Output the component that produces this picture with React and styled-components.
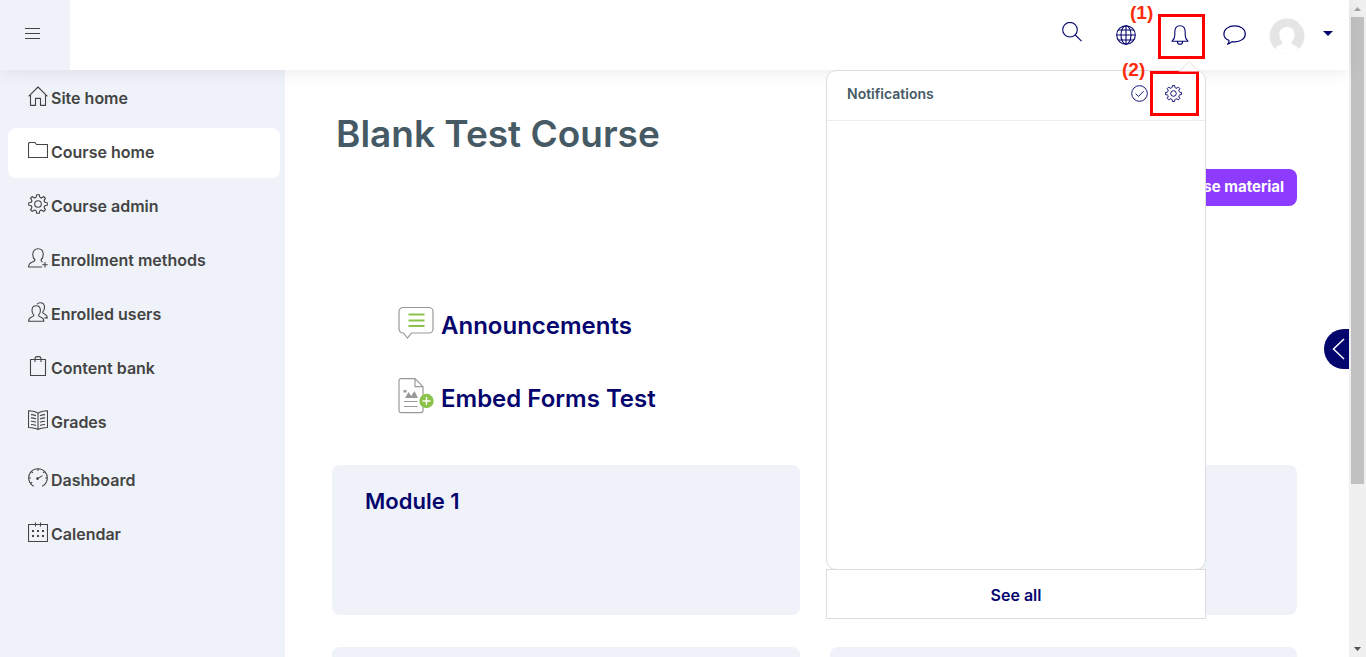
import { useState } from "react";
import styled, { createGlobalStyle, css } from "styled-components";

const GlobalStyle = createGlobalStyle`
  * {
    box-sizing: border-box;
  }
  body {
    margin: 0;
    background: #fff;
    font-family: Inter, "Open Sans", "Liberation Sans", sans-serif;
  }
  button {
    padding: 0;
    border: 0;
    background: none;
    font-family: inherit;
    cursor: pointer;
  }
  a {
    color: inherit;
    text-decoration: none;
  }
`;

const Screen = styled.div`
  display: flex;
  height: 100vh;
  overflow: hidden;
`;

const Page = styled.div`
  position: relative;
  display: flex;
  flex-direction: column;
  flex: 1;
  min-width: 0;
`;

const Header = styled.header`
  position: relative;
  z-index: 2;
  display: flex;
  justify-content: space-between;
  flex: none;
  height: 70px;
  background: #fff;
  box-shadow: 0 2px 16px rgba(0, 0, 0, 0.08);
`;

const MenuButton = styled.button`
  display: flex;
  align-items: center;
  width: 70px;
  padding: 0 0 2px 25px;
  background: #eff3f9;
  color: #444;
`;

const Tools = styled.div`
  display: flex;
  align-items: center;
  color: #05056e;
  padding-right: 16px;
`;

const ToolButton = styled.button`
  display: flex;
  align-items: center;
  justify-content: center;
  width: 54px;
  height: 70px;
  color: #05056e;
`;

const SearchButton = styled(ToolButton)`
  padding-bottom: 6px;
`;

const BellArea = styled.div`
  position: relative;
`;

const UserButton = styled(ToolButton)`
  gap: 18px;
  width: auto;
  padding: 2px 0 0 8px;
`;

const Caret = styled.span`
  border: 5px solid transparent;
  border-top-color: #05056e;
  border-bottom: 0;
  margin-bottom: 6px;
`;

const Popover = styled.section`
  position: absolute;
  top: 70px;
  right: 1px;
  width: 380px;
`;

const PopoverArrow = styled.svg`
  position: absolute;
  top: -10px;
  right: 6px;
`;

const PopoverPanel = styled.div`
  height: 500px;
  background: #fff;
  border: 1px solid #dcdcdc;
  border-radius: 10px;
`;

const PopoverHead = styled.div`
  display: flex;
  align-items: center;
  height: 50px;
  padding: 0 6px 4px 20px;
  border-bottom: 1px solid #ececec;
`;

const PopoverTitle = styled.h3`
  flex: 1;
  margin: 0;
  color: #455a64;
  font-size: 14px;
  line-height: 20px;
  font-weight: 600;
`;

const HeadButton = styled.button`
  position: relative;
  display: flex;
  width: 34px;
  height: 20px;
  align-items: center;
  color: #05056e;
`;

const SeeAll = styled.a`
  display: flex;
  align-items: center;
  justify-content: center;
  height: 50px;
  margin-top: -1px;
  padding-top: 2px;
  border: 1px solid #dcdcdc;
  background: #fff;
  font-size: 16px;
  font-weight: 600;
`;

const markText = css`
  color: #ff2a0c;
  font-family: "Liberation Sans", Arial, sans-serif;
  font-size: 19px;
  font-weight: bold;
  line-height: 20px;
`;

// numbered red frames over the controls to click
const Mark = styled.span`
  position: absolute;
  top: ${(props) => props.$top}px;
  left: ${(props) => props.$left}px;
  width: ${(props) => props.$width}px;
  height: 45px;
  border: 3px solid #f00;
  pointer-events: none;
`;

const MarkNumber = styled.span`
  position: absolute;
  top: -14px;
  left: -31px;
  ${markText}
`;

const Body = styled.div`
  display: flex;
  flex: 1;
  min-height: 0;
`;

const Sidebar = styled.nav`
  flex: none;
  width: 285px;
  padding: 4px 5px 0 8px;
  background: #eff3f9;
`;

const NavList = styled.ul`
  margin: 0 0 8px;
  padding: 0;
  list-style: none;
`;

const NavItem = styled.li`
  margin-bottom: 4px;
`;

const NavLink = styled.a`
  display: flex;
  align-items: center;
  gap: 3px;
  height: 50px;
  padding: 0 0 2px 20px;
  border-radius: 8px;
  background: ${(props) => (props.$active ? "#fff" : "transparent")};
  color: #444;
  font-size: 16px;
  font-weight: 600;

  svg {
    margin-bottom: 4px;
  }
`;

const Main = styled.main`
  flex: 1;
  min-width: 0;
  padding: 40px 52px 0 47px;
  overflow: hidden;
`;

const Title = styled.h1`
  margin: 0 4px;
  color: #455a64;
  font-size: 37px;
  line-height: 48px;
  font-weight: 600;
`;

const Toolbar = styled.div`
  display: flex;
  justify-content: flex-end;
  margin: 11px 0 83px;
`;

const MaterialButton = styled.button`
  height: 37px;
  padding: 0 13px 2px;
  border-radius: 8px;
  background: #8c3bff;
  color: #fff;
  font-size: 15px;
  font-weight: 700;
`;

const Activities = styled.ul`
  margin: 0 0 30px;
  padding: 0 0 0 66px;
  list-style: none;
`;

const Activity = styled.li`
  display: flex;
  align-items: center;
  height: 73px;
`;

const ActivityLink = styled.a`
  display: flex;
  align-items: center;
  gap: 7px;
  color: #05056e;
  font-size: 24px;
  line-height: 30px;
  font-weight: 600;

  svg {
    margin-bottom: 6px;
  }
`;

const Modules = styled.div`
  display: grid;
  grid-template-columns: 1fr 1fr;
  gap: 32px 30px;
`;

const ModuleCard = styled.article`
  height: 150px;
  padding: 21px 33px;
  border-radius: 8px;
  background: #eff3f9;
`;

const ModuleTitle = styled.h2`
  margin: 0;
  color: #05056e;
  font-size: 22px;
  line-height: 30px;
  font-weight: 600;
`;

const DrawerButton = styled.button`
  position: absolute;
  top: 329px;
  right: 0;
  display: flex;
  align-items: center;
  width: 25px;
  height: 40px;
  padding-left: 8px;
  border-radius: 20px 0 0 20px;
  background: #05056e;
  color: #fff;
`;

const ScrollTrack = styled.div`
  display: flex;
  flex-direction: column;
  align-items: center;
  flex: none;
  width: 17px;
  background: #f0f0f0;
`;

const ScrollArrow = styled.button`
  display: flex;
  align-items: center;
  justify-content: center;
  width: 17px;
  height: 17px;
  color: ${(props) => (props.$dim ? "#a3a3a3" : "#505050")};
`;

const ScrollRail = styled.div`
  flex: 1;
  width: 13px;
`;

const ScrollThumb = styled.div`
  height: 75%;
  background: #c1c1c1;
`;

const Icon = ({ size = 20, children, ...rest }) => (
  <svg
    width={size}
    height={size}
    viewBox="0 0 20 20"
    fill="none"
    stroke="currentColor"
    strokeWidth="1.1"
    strokeLinejoin="round"
    aria-hidden="true"
    {...rest}
  >
    {children}
  </svg>
);

const HomeIcon = () => (
  <Icon>
    <path d="M.6 10.4 10 1l9.400 9.400M2.500 9v10.400h5v-7h5v7h5V9" />
  </Icon>
);

const FolderIcon = () => (
  <Icon>
    <path d="M.5 17.500v-14l1-1h5.500l1.500 2h11v13z" />
  </Icon>
);

// eight rounded teeth around the centre
const gearPath = () => {
  const at = (deg, r) => {
    const a = (deg * Math.PI) / 180;
    return `${(10 + r * Math.cos(a)).toFixed(2)} ${(10 + r * Math.sin(a)).toFixed(2)}`;
  };
  let d = `M${at(-8, 9.4)}`;
  for (let i = 0; i < 8; i++) {
    const a = i * 45;
    d += `L${at(a + 8, 9.4)}L${at(a + 12, 7.6)}Q${at(a + 22.5, 6.1)} ${at(a + 33, 7.6)}L${at(a + 37, 9.4)}`;
  }
  return d + "z";
};

const GearIcon = ({ size }) => (
  <Icon size={size}>
    <path d={gearPath()} />
    <circle cx="10" cy="10" r="3.3" />
  </Icon>
);

const UserPlusIcon = () => (
  <Icon>
    <path d="M14 19H.6c0-3 .9-3.800 3.400-4.700 2.200-.8 3-1.200 3-2.300-1.500-1.400-2.200-3.300-2.200-5.600C4.800 3 6.800.8 10 .8s5.200 2.200 5.200 5.600c0 2.300-.7 4.200-2.200 5.600 0 1 .4 1.600 1.600 2" />
    <path d="M17 14v5.500M14.200 16.700h5.500" />
  </Icon>
);

const UsersIcon = () => (
  <Icon>
    <path d="M.6 19.200c0-2.700.7-3.300 2.700-4 1.900-.7 2.600-1 2.600-2C4.600 12 4 10.300 4 8.400 4 5.500 5.600 3.700 8.200 3.700s4.200 1.800 4.200 4.700c0 1.900-.6 3.600-1.900 4.800 0 1 .7 1.300 2.500 2 2 .7 2.800 1.300 2.800 4z" />
    <path d="M9 2.200C9.700 1.200 11 .7 12.300.7c2.600 0 4.200 1.800 4.200 4.700 0 1.900-.6 3.600-1.900 4.800 0 1 .7 1.300 2.300 2 1.800.8 2.500 1.400 2.500 3.700h-3" />
  </Icon>
);

const BagIcon = () => (
  <Icon>
    <path d="M2.500 3.500h15v16h-15zM7 6V3c0-1.500.7-2.400 2-2.400h2c1.300 0 2 .9 2 2.400v3" />
  </Icon>
);

const BookIcon = () => (
  <Icon>
    <path d="M10 3.200C8 1.800 5 1 .5.8v16.700c4.500.2 7.500.8 9.500 2 2-1.200 5-1.800 9.500-2V.8C15 1 12 1.800 10 3.200zM10 3.200v16.300" />
    <path d="M3 4.600c2 .1 3.600.5 5 1.100M3 7.900c2 .1 3.600.5 5 1.100M3 11.200c2 .1 3.600.5 5 1.100M3 14.500c2 .1 3.600.5 5 1.100M17 4.600c-2 .1-3.600.5-5 1.100M17 7.900c-2 .1-3.600.5-5 1.100M17 11.200c-2 .1-3.600.5-5 1.100M17 14.500c-2 .1-3.600.5-5 1.100" />
  </Icon>
);

const GaugeIcon = () => (
  <Icon>
    <path d="M5.800 18.300a9.300 9.300 0 1 1 8.400 0M10 .8v2M3.500 3.500l1.400 1.400M16.500 3.500l-1.400 1.400M.8 10h2M19.200 10h-2M2.700 15.300l1.500-1" />
    <path d="m9.500 10.600 5-3" />
    <circle cx="9.500" cy="10.600" r=".8" fill="currentColor" />
  </Icon>
);

const CalendarIcon = () => (
  <Icon>
    <path d="M.5 2.500h19v17H.5zM7.500.5v4M12.500.5v4" />
    <path
      d="M4 9h2M9 9h2M14 9h2M4 14h2M9 14h2M14 14h2"
      strokeWidth="2"
    />
  </Icon>
);

const MenuIcon = () => (
  <svg width="15" height="12" stroke="currentColor" aria-hidden="true">
    <path d="M0 .5h15M0 5.500h15M0 10.500h15" />
  </svg>
);

const SearchIcon = () => (
  <Icon>
    <circle cx="8" cy="7.700" r="7.300" />
    <path d="m13.300 13 6.200 6.200" />
  </Icon>
);

const GlobeIcon = () => (
  <Icon>
    <circle cx="10" cy="10" r="9.300" />
    <ellipse cx="10" cy="10" rx="5" ry="9.300" />
    <path d="M10 .7v18.600M.7 10h18.600M2.300 5h15.400M2.300 15h15.400" />
  </Icon>
);

const BellIcon = () => (
  <Icon>
    <path d="M2 16.200c1.800-1.600 2.800-3 2.800-6V7c0-3.700 2-6.200 5.200-6.200S15.200 3.300 15.200 7v3.200c0 3 1 4.400 2.800 6zM7.400 16.400c0 1.700 1 2.900 2.600 2.900s2.600-1.200 2.600-2.900" />
  </Icon>
);

const ChatIcon = () => (
  <svg
    width="23"
    height="20"
    viewBox="0 0 23 20"
    fill="none"
    stroke="currentColor"
    strokeWidth="1.200"
    strokeLinejoin="round"
    aria-hidden="true"
  >
    <path d="M4.500 19.200c1.400-1.200 1.800-2.300 1.500-3.800C2.700 14.200.9 11.800.9 8.900.9 4.300 5.600.8 11.700.8s10.600 3.500 10.600 8.100-4.800 8-10.600 8c-1 0-1.900-.1-2.800-.3-1.400 1.300-2.700 2.100-4.400 2.600z" />
  </svg>
);

const CheckIcon = () => (
  <Icon size={17}>
    <circle cx="10" cy="10" r="9.200" />
    <path d="m5.500 10.200 3.300 3.300 6-6.200" />
  </Icon>
);

const Avatar = () => (
  <svg width="36" height="36" viewBox="0 0 36 36" aria-hidden="true">
    <clipPath id="avatar">
      <circle cx="18" cy="18" r="17.500" />
    </clipPath>
    <g clipPath="url(#avatar)">
      <path fill="#e5e5e5" d="M0 0h36v36H0z" />
      <path
        fill="#fff"
        d="M18 9c4.500 0 7.600 3 7.600 7.400 0 3.600-1.600 6.300-3.300 8.200.3 1.500 1.500 2 3.200 2.600 3 1 4.500 2.500 5 8.800h-25c.5-6.300 2-7.800 5-8.800 1.700-.6 2.900-1.100 3.200-2.600-1.700-1.900-3.300-4.600-3.300-8.200C10.400 12 13.500 9 18 9z"
      />
    </g>
  </svg>
);

const ForumIcon = () => (
  <svg width="36" height="36" viewBox="0 0 36 36" fill="none" aria-hidden="true">
    <path
      d="M5 2.500h26a4 4 0 0 1 4 4V24a4 4 0 0 1-4 4H13.500l-4 5-4-5H5a4 4 0 0 1-4-4V6.500a4 4 0 0 1 4-4z"
      stroke="#999"
      strokeWidth="1.200"
    />
    <path d="M10.500 9.500h16M10.500 15.500h16M10.500 21h16" stroke="#8bc34a" strokeWidth="1.800" />
  </svg>
);

const PageIcon = () => (
  <svg width="36" height="36" viewBox="0 1 36 36" fill="none" aria-hidden="true">
    <path
      d="M3 1.600h14l8 8v24a2 2 0 0 1-2 2H3a2 2 0 0 1-2-2v-30a2 2 0 0 1 2-2zM17 1.600v8h8"
      stroke="#999"
      strokeWidth="1.200"
      strokeLinejoin="round"
    />
    <path d="m7 21 3.500-6 2.700 4 3.300-5 3.500 7zM5.500 13h3v2.500h-3z" fill="#999" />
    <path d="M6 24.500h13.500M6 29.500h13.500" stroke="#999" strokeWidth="1.200" />
    <circle cx="28.500" cy="24" r="7.200" fill="#8bc34a" />
    <path d="M28.500 20v8M24.500 24h8" stroke="#fff" strokeWidth="1.400" />
  </svg>
);

const courseLinks = [
  { name: "Site home", icon: HomeIcon },
  { name: "Course home", icon: FolderIcon },
  { name: "Course admin", icon: GearIcon },
  { name: "Enrollment methods", icon: UserPlusIcon },
  { name: "Enrolled users", icon: UsersIcon },
  { name: "Content bank", icon: BagIcon },
  { name: "Grades", icon: BookIcon },
];

const siteLinks = [
  { name: "Dashboard", icon: GaugeIcon },
  { name: "Calendar", icon: CalendarIcon },
];

const activities = [
  { name: "Announcements", icon: ForumIcon },
  { name: "Embed Forms Test", icon: PageIcon },
];

const NavGroup = ({ links, active, onSelect }) => (
  <NavList>
    {links.map(({ name, icon: LinkIcon }) => (
      <NavItem key={name}>
        <NavLink href="#" $active={name === active} onClick={() => onSelect(name)}>
          <LinkIcon />
          {name}
        </NavLink>
      </NavItem>
    ))}
  </NavList>
);

const Notifications = () => (
  <Popover>
    <PopoverPanel>
      <PopoverHead>
        <PopoverTitle>Notifications</PopoverTitle>
        <HeadButton aria-label="Mark all as read">
          <CheckIcon />
        </HeadButton>
        <HeadButton aria-label="Notification preferences">
          <GearIcon size={17} />
          <Mark $top={-13} $left={-15} $width={49}>
            <MarkNumber>(2)</MarkNumber>
          </Mark>
        </HeadButton>
      </PopoverHead>
    </PopoverPanel>
    <PopoverArrow width="22" height="12" aria-hidden="true">
      <path d="M1 11.500 11 1.500l10 10" fill="#fff" stroke="#dcdcdc" />
    </PopoverArrow>
    <SeeAll href="#">See all</SeeAll>
  </Popover>
);

const App = () => {
  const [active, setActive] = useState("Course home");
  const [open, setOpen] = useState(true);

  return (
    <>
      <GlobalStyle />
      <Screen>
        <Page>
          <Header>
            <MenuButton aria-label="Menu">
              <MenuIcon />
            </MenuButton>
            <Tools>
              <SearchButton aria-label="Search">
                <SearchIcon />
              </SearchButton>
              <ToolButton aria-label="Language">
                <GlobeIcon />
              </ToolButton>
              <BellArea>
                <ToolButton aria-label="Notifications" onClick={() => setOpen(!open)}>
                  <BellIcon />
                </ToolButton>
                {open && <Notifications />}
                <Mark $top={14} $left={5} $width={47}>
                  <MarkNumber>(1)</MarkNumber>
                </Mark>
              </BellArea>
              <ToolButton aria-label="Messages">
                <ChatIcon />
              </ToolButton>
              <UserButton aria-label="User menu">
                <Avatar />
                <Caret />
              </UserButton>
            </Tools>
          </Header>
          <Body>
            <Sidebar>
              <NavGroup links={courseLinks} active={active} onSelect={setActive} />
              <NavGroup links={siteLinks} active={active} onSelect={setActive} />
            </Sidebar>
            <Main>
              <Title>Blank Test Course</Title>
              <Toolbar>
                <MaterialButton>Course material</MaterialButton>
              </Toolbar>
              <Activities>
                {activities.map(({ name, icon: ActivityIcon }) => (
                  <Activity key={name}>
                    <ActivityLink href="#">
                      <ActivityIcon />
                      {name}
                    </ActivityLink>
                  </Activity>
                ))}
              </Activities>
              <Modules>
                <ModuleCard>
                  <ModuleTitle>Module 1</ModuleTitle>
                </ModuleCard>
                <ModuleCard />
                <ModuleCard />
                <ModuleCard />
              </Modules>
            </Main>
          </Body>
          <DrawerButton aria-label="Open drawer">
            <svg width="13" height="22" fill="none" stroke="currentColor" strokeWidth="1.500">
              <path d="M12 1 1.500 11 12 21" />
            </svg>
          </DrawerButton>
        </Page>
        <ScrollTrack>
          <ScrollArrow $dim aria-label="Scroll up">
            <svg width="7" height="4" fill="currentColor">
              <path d="M0 4 3.500 0 7 4z" />
            </svg>
          </ScrollArrow>
          <ScrollRail>
            <ScrollThumb />
          </ScrollRail>
          <ScrollArrow aria-label="Scroll down">
            <svg width="7" height="4" fill="currentColor">
              <path d="M0 0h7L3.500 4z" />
            </svg>
          </ScrollArrow>
        </ScrollTrack>
      </Screen>
    </>
  );
};

export default App;
